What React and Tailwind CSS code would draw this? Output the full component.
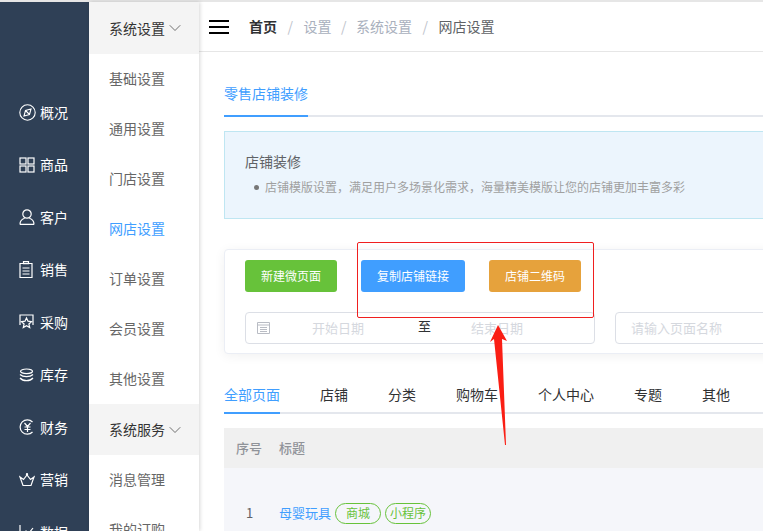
import { ChevronDown } from "lucide-react";

const font = "font-['Microsoft_YaHei','Noto_Sans_CJK_SC',sans-serif]";

function IconOverview() {
  return (
    <svg width="17" height="17" viewBox="0 0 17 17" fill="none" stroke="currentColor" strokeWidth="1.1">
      <circle cx="8.500" cy="8.500" r="7.700" />
      <path d="M12 5l-1.500 5.500L5 12l1.500-5.500zM6.500 6.500l4 4" />
    </svg>
  );
}
function IconGoods() {
  return (
    <svg width="16" height="16" viewBox="0 0 16 16" fill="none" stroke="currentColor" strokeWidth="1.2">
      <rect x="1" y="1" width="6" height="6" />
      <rect x="9" y="1" width="6" height="6" />
      <rect x="1" y="9" width="6" height="6" />
      <rect x="9" y="9" width="6" height="6" />
    </svg>
  );
}
function IconCustomer() {
  return (
    <svg width="16" height="16" viewBox="0 0 16 16" fill="none" stroke="currentColor" strokeWidth="1.2">
      <circle cx="8" cy="5" r="4.200" />
      <path d="M1 15.400c0-3.500 2.500-5.400 4.700-6.100M15 15.400c0-3.500-2.500-5.400-4.700-6.100M1 15.400h14" />
    </svg>
  );
}
function IconSales() {
  return (
    <svg width="14" height="17" viewBox="0 0 14 17" fill="none" stroke="currentColor" strokeWidth="1.2">
      <path d="M1 2.500h12v14H1z" />
      <path d="M4.500 .6h5v2h-5zM3.500 7h7M3.500 10h7M3.500 13h7" />
    </svg>
  );
}
function IconBuy() {
  return (
    <svg width="15" height="17" viewBox="0 0 15 17" fill="none" stroke="currentColor" strokeWidth="1.2">
      <path d="M1 11V1h13v10" />
      <path d="M7.500 4l1.500 3.200 3.500.4-2.600 2.400.8 3.500-3.200-1.800-3.200 1.800.8-3.500L2.500 7.600 6 7.200z" />
    </svg>
  );
}
function IconStock() {
  return (
    <svg width="15" height="14" viewBox="0 0 15 14" fill="none" stroke="currentColor" strokeWidth="1.2">
      <path d="M7.500 1C11 1 13.500 2.200 13.500 3.300S11 5.600 7.500 5.600 1.500 4.400 1.500 3.300 4 1 7.500 1z" />
      <path d="M1 6.500c1.500 1.500 4 2.200 6.500 2.200S12.500 8 14 6.500M1 10c1.500 1.800 4 2.700 6.500 2.700S12.500 11.800 14 10" />
    </svg>
  );
}
function IconFinance() {
  return (
    <svg width="16" height="16" viewBox="0 0 16 16" fill="none" stroke="currentColor" strokeWidth="1.2">
      <path d="M13.500 3A7.200 7.200 0 1 0 13.500 13" />
      <path d="M5.500 4l3 3.500 3-3.500M8.500 7.500V13M5.500 8h6M5.500 10.500h6" />
    </svg>
  );
}
function IconMarket() {
  return (
    <svg width="16" height="14" viewBox="0 0 16 14" fill="none" stroke="currentColor" strokeWidth="1.2">
      <path d="M1 4l3 8.500h8L15 4l-3.500 2.500L8 2 4.500 6.500z" />
      <circle cx="8" cy="1.200" r=".6" />
    </svg>
  );
}
function IconData() {
  return (
    <svg width="16" height="16" viewBox="0 0 16 16" fill="none" stroke="currentColor" strokeWidth="1.2">
      <path d="M1 1v14h14M4 10l3-3 3 2 4-5" />
    </svg>
  );
}
function IconCalendar() {
  return (
    <svg width="13" height="12" viewBox="0 0 13 12" fill="none" stroke="#b9bcc4" strokeWidth="1">
      <path d="M.5.500h12v11H.5zM.5 3h12M3 5.500h7M3 7.500h7M3 9.500h7" />
    </svg>
  );
}

const railItems = [
  { label: "概况", icon: <IconOverview /> },
  { label: "商品", icon: <IconGoods /> },
  { label: "客户", icon: <IconCustomer /> },
  { label: "销售", icon: <IconSales /> },
  { label: "采购", icon: <IconBuy /> },
  { label: "库存", icon: <IconStock /> },
  { label: "财务", icon: <IconFinance /> },
  { label: "营销", icon: <IconMarket /> },
  { label: "数据", icon: <IconData /> },
];

const menuItems = [
  { label: "系统设置", head: true, first: true },
  { label: "基础设置" },
  { label: "通用设置" },
  { label: "门店设置" },
  { label: "网店设置", active: true },
  { label: "订单设置" },
  { label: "会员设置" },
  { label: "其他设置" },
  { label: "系统服务", head: true },
  { label: "消息管理" },
  { label: "我的订购" },
];

const pageTabs = ["店铺", "分类", "购物车", "个人中心", "专题", "其他"];

function Rail() {
  return (
    <div className="w-[89px] shrink-0 bg-[#2f4056] pt-[84px] text-white">
      {railItems.map((item) => (
        <div key={item.label} className="flex h-[52.500px] items-center pl-[19px]">
          <span className="flex w-[21px] shrink-0 justify-start">{item.icon}</span>
          <span className="text-[14px]">{item.label}</span>
        </div>
      ))}
    </div>
  );
}

function Menu() {
  return (
    <div className="z-10 w-[110px] shrink-0 bg-white shadow-[1px_0_4px_rgba(0,0,0,0.16)]">
      {menuItems.map((item) => (
        <div
          key={item.label}
          className={
            item.head
              ? item.first
                ? "flex h-[52px] items-center bg-[#f4f4f4] pl-[20px] text-[14px] text-[#333333]"
                : "flex h-[51px] items-center bg-[#f4f4f4] pl-[20px] text-[14px] text-[#333333]"
              : item.active
                ? "flex h-[50px] items-center pb-[2px] pl-[20px] text-[14px] text-[#409eff]"
                : "flex h-[50px] items-center pb-[2px] pl-[20px] text-[14px] text-[#666666]"
          }
        >
          {item.label}
          {item.head && <ChevronDown size={20} strokeWidth={1} className="text-[#555555]" />}
        </div>
      ))}
    </div>
  );
}

function Header() {
  return (
    <div className="flex h-[50px] shrink-0 items-center border-b border-[#e6e6e6] pl-[10px] text-[14px]">
      <div className="flex w-[20px] flex-col gap-[4px]">
        <span className="h-[2px] bg-black" />
        <span className="h-[2px] bg-black" />
        <span className="h-[2px] bg-black" />
      </div>
      <span className="ml-[20px] font-bold text-[#303133]">首页</span>
      <span className="mx-[10.500px] text-[#c0c4cc]">/</span>
      <span className="text-[#a9b0bd]">设置</span>
      <span className="mx-[9.500px] text-[#c0c4cc]">/</span>
      <span className="text-[#a9b0bd]">系统设置</span>
      <span className="mx-[10.500px] text-[#c0c4cc]">/</span>
      <span className="text-[#606266]">网店设置</span>
    </div>
  );
}

function Toolbar() {
  return (
    <div className="mt-[30px] h-[105px] rounded-[4px] border border-[#ebeef5] bg-white px-[20px] pt-[10px] shadow-[0_2px_12px_rgba(0,0,0,0.06)]">
      <div className="flex text-[12px] text-white">
        <button className="flex h-[32px] w-[92px] items-center justify-center rounded-[3px] bg-[#67c23a]">新建微页面</button>
        <button className="ml-[24px] flex h-[32px] w-[104px] items-center justify-center rounded-[3px] bg-[#409eff]">复制店铺链接</button>
        <button className="ml-[24px] flex h-[32px] w-[92px] items-center justify-center rounded-[3px] bg-[#e6a23c]">店铺二维码</button>
      </div>
      <div className="mt-[20px] flex">
        <div className="flex h-[32px] w-[350px] shrink-0 items-center rounded-[4px] border border-[#dcdfe6] pl-[11px] text-[13px] text-[#d5d8de]">
          <IconCalendar />
          <span className="ml-[42px]">开始日期</span>
          <span className="mb-[4px] ml-[54px] text-[#303133]">至</span>
          <span className="ml-[40px]">结束日期</span>
        </div>
        <div className="ml-[20px] flex h-[32px] w-[200px] shrink-0 items-center rounded-[4px] border border-[#dcdfe6] pl-[15px] text-[13px] text-[#d5d8de]">
          请输入页面名称
        </div>
      </div>
    </div>
  );
}

function PageTabs() {
  return (
    <div className="mt-[24px] flex h-[36px] gap-[40px] border-b-2 border-[#e4e7ed] pt-[6px] text-[14px] text-[#303133]">
      <div className="-mb-[2px] w-[56px] shrink-0 border-b-2 border-[#409eff] text-[#409eff]">全部页面</div>
      {pageTabs.map((tab) => (
        <div key={tab} className="shrink-0">
          {tab}
        </div>
      ))}
    </div>
  );
}

function Table() {
  return (
    <div className="mt-[14px]">
      <div className="flex h-[40px] items-center bg-[#f0f0f0] pl-[12px] text-[13px] font-medium text-[#909399]">
        <span className="w-[43px]">序号</span>
        <span>标题</span>
      </div>
      <div className="flex h-[70px] items-center bg-[#f5f6fa] pt-[20px] text-[13px]">
        <span className="w-[55px] pl-[22px] text-[#606266]">1</span>
        <span className="text-[#409eff]">母婴玩具</span>
        <span className="ml-[4px] flex h-[21px] w-[46px] items-center justify-center rounded-full border border-[#67c23a] text-[12px] text-[#67c23a]">商城</span>
        <span className="ml-[4px] flex h-[21px] w-[46px] items-center justify-center rounded-full border border-[#67c23a] text-[12px] text-[#67c23a]">小程序</span>
      </div>
    </div>
  );
}

export default function App() {
  return (
    <div className={`${font} relative h-[531px] w-[763px] overflow-hidden bg-white`}>
      <div className="h-[2px] bg-[#e6e6e6]" />
      <div className="flex h-[529px]">
        <Rail />
        <Menu />
        <div className="flex w-[800px] shrink-0 flex-col">
          <Header />
          <div className="pl-[25px] pr-[24px]">
            <div className="mt-[31px] flex h-[34px] border-b-2 border-[#e4e7ed] text-[14px] text-[#409eff]">
              <div className="-mb-[2px] w-[84px] shrink-0 border-b-2 border-[#409eff]">零售店铺装修</div>
            </div>
            <div className="mt-[14px] h-[88px] border border-[#bfe6f2] bg-[#ecf5fd] pl-[20px] pt-[19px]">
              <div className="text-[14px] leading-[20px] text-[#606266]">店铺装修</div>
              <div className="mt-[7px] flex items-center pl-[9px] text-[12px] leading-[18px] text-[#a0a0a0]">
                <span className="mr-[6px] h-[5px] w-[5px] rounded-full bg-[#777777]" />
                店铺模版设置，满足用户多场景化需求，海量精美模版让您的店铺更加丰富多彩
              </div>
            </div>
            <Toolbar />
            <PageTabs />
            <Table />
          </div>
        </div>
      </div>
      {/* annotation drawn over the screenshot */}
      <div className="absolute left-[357px] top-[242px] h-[76px] w-[237px] rounded-[2px] border border-[#f01f1f]" />
      <svg className="absolute left-0 top-0" width="763" height="531" fill="#fa1e14">
        <polygon points="498,325 507,341 502,339 506,445 505,445 494,339 490,342" />
      </svg>
    </div>
  );
}
